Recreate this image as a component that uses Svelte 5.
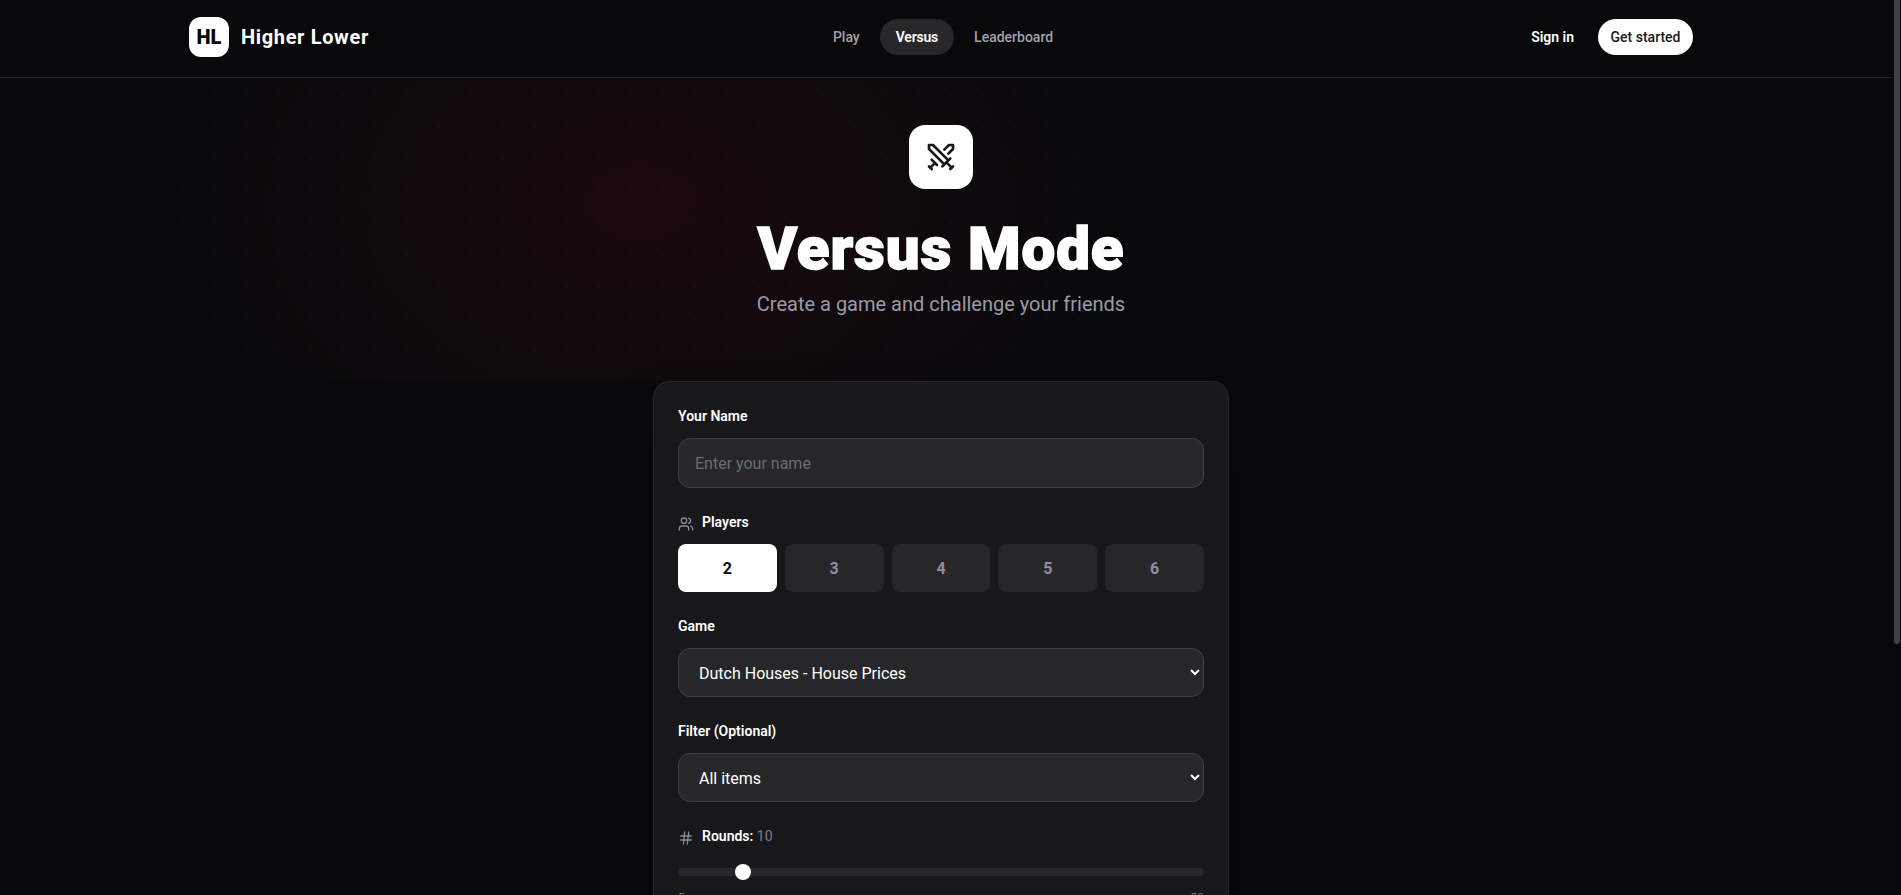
<script>
  let rounds = $state(10);
  let players = $state(2);
  const counts = [2, 3, 4, 5, 6];
</script>

<div class="window">
  <div class="scroll">
    <div class="page">
      <header class="header">
        <div class="bar">
          <a class="brand" href="#top">
            <span class="mark">HL</span>
            <span class="word">Higher Lower</span>
          </a>
          <nav class="nav">
            <a href="#play">Play</a>
            <a href="#versus" class="on">Versus</a>
            <a href="#board">Leaderboard</a>
          </nav>
          <div class="auth">
            <a class="signin" href="#in">Sign in</a>
            <a class="started" href="#start">Get started</a>
          </div>
        </div>
      </header>

      <section class="hero">
        <div class="badge">
          <svg width="32" height="32" viewBox="0 0 24 24" fill="none" stroke="#18181b" stroke-width="2" stroke-linecap="round" stroke-linejoin="round">
            <polyline points="14.5 17.5 3 6 3 3 6 3 17.5 14.5" />
            <line x1="13" y1="19" x2="19" y2="13" />
            <line x1="16" y1="16" x2="20" y2="20" />
            <line x1="19" y1="21" x2="21" y2="19" />
            <polyline points="14.5 6.5 18 3 21 3 21 6 17.5 9.5" />
            <line x1="5" y1="14" x2="9" y2="18" />
            <line x1="7" y1="17" x2="4" y2="20" />
            <line x1="3" y1="19" x2="5" y2="21" />
          </svg>
        </div>
        <h1>Versus Mode</h1>
        <p>Create a game and challenge your friends</p>
      </section>

      <main class="main">
        <form class="card">
          <div class="field">
            <label for="name">Your Name</label>
            <input id="name" type="text" placeholder="Enter your name" />
          </div>

          <div class="field">
            <div class="label-row">
              <svg width="16" height="16" viewBox="0 0 24 24" fill="none" stroke="#8a8a94" stroke-width="2" stroke-linecap="round" stroke-linejoin="round">
                <path d="M16 21v-2a4 4 0 0 0-4-4H6a4 4 0 0 0-4 4v2" />
                <circle cx="9" cy="7" r="4" />
                <path d="M22 21v-2a4 4 0 0 0-3-3.87" />
                <path d="M16 3.13a4 4 0 0 1 0 7.75" />
              </svg>
              <span>Players</span>
            </div>
            <div class="counts">
              {#each counts as n}
                <button type="button" class:sel={players === n} onclick={() => (players = n)}>{n}</button>
              {/each}
            </div>
          </div>

          <div class="field">
            <label for="game">Game</label>
            <select id="game">
              <option>Dutch Houses - House Prices</option>
            </select>
          </div>

          <div class="field">
            <label for="filter">Filter (Optional)</label>
            <select id="filter">
              <option>All items</option>
            </select>
          </div>

          <div class="field">
            <div class="label-row">
              <svg width="16" height="16" viewBox="0 0 24 24" fill="none" stroke="#8a8a94" stroke-width="2" stroke-linecap="round" stroke-linejoin="round">
                <line x1="4" y1="9" x2="20" y2="9" />
                <line x1="4" y1="15" x2="20" y2="15" />
                <line x1="10" y1="3" x2="8" y2="21" />
                <line x1="16" y1="3" x2="14" y2="21" />
              </svg>
              <span>Rounds: <em>{rounds}</em></span>
            </div>
            <input class="range" type="range" min="5" max="50" bind:value={rounds} />
            <div class="ends"><span>5</span><span>50</span></div>
          </div>

          <button class="create" type="button">Create Game</button>
        </form>
      </main>
    </div>
  </div>
  <div class="rail"><div class="thumb"></div></div>
</div>

<style>
  :global(body) {
    margin: 0;
    background: #09090b;
    overflow: hidden;
  }
  a { text-decoration: none; color: inherit; }
  .window {
    height: 100vh;
    display: flex;
    background: #09090b;
    color: #fff;
    font-family: Roboto, "Noto Sans", sans-serif;
  }
  .scroll {
    flex: 1;
    min-width: 0;
    overflow-y: auto;
    scrollbar-width: none;
  }
  .rail {
    width: 9px;
    flex: none;
    box-sizing: border-box;
    padding: 0 1px 0 2px;
  }
  .thumb {
    height: 644px;
    background: #3f3f46;
    border-radius: 0 0 3px 3px;
  }
  .page { min-height: 1244px; }

  .header {
    border-bottom: 1px solid #27272a;
    padding: 17px 10px 20px 0;
  }
  .bar {
    max-width: 1504px;
    margin: 0 auto;
    display: grid;
    grid-template-columns: 1fr auto 1fr;
    align-items: center;
    height: 40px;
  }
  .brand { display: flex; align-items: center; gap: 12px; }
  .mark {
    width: 40px;
    height: 40px;
    border-radius: 12px;
    background: #fff;
    color: #09090b;
    font-weight: 900;
    font-size: 20px;
    display: flex;
    align-items: center;
    justify-content: center;
  }
  .word { font-size: 20px; font-weight: 700; letter-spacing: 0.65px; }
  .nav {
    display: flex;
    gap: 4px;
    margin-left: 4px;
    font-size: 14px;
    font-weight: 500;
    color: #a1a1aa;
  }
  .nav a { padding: 8px 16px; line-height: 20px; border-radius: 18px; }
  .nav .on { background: #27272a; color: #fff; font-weight: 600; letter-spacing: -0.2px; }
  .auth {
    justify-self: end;
    display: flex;
    align-items: center;
    gap: 24px;
    font-size: 14px;
    font-weight: 500;
  }
  .signin { font-weight: 600; }
  .started {
    background: #fff;
    color: #18181b;
    padding: 8px 12.5px;
    line-height: 20px;
    border-radius: 18px;
  }

  .hero {
    height: 256px;
    padding: 47px 10px 0 0;
    display: flex;
    flex-direction: column;
    align-items: center;
    background-color: #09090b;
    background-image:
      radial-gradient(circle, rgba(255, 255, 255, 0.025) 1px, transparent 1px),
      radial-gradient(ellipse 470px 340px at 640px 125px, rgba(190, 18, 60, 0.09), transparent 100%);
    background-size: 32px 32px, 100% 100%;
    background-position: 7px 0, 0 0;
  }
  .badge {
    width: 64px;
    height: 64px;
    border-radius: 16px;
    background: #fff;
    display: flex;
    align-items: center;
    justify-content: center;
  }
  h1 {
    margin: 30px 0 0;
    font-size: 60px;
    line-height: 60px;
    font-weight: 900;
    letter-spacing: 0.9px;
    -webkit-text-stroke: 1.5px #fff;
  }
  p {
    margin: 11px 0 0;
    font-size: 20px;
    line-height: 28px;
    color: #9a9aa8;
  }

  .main { padding-right: 10px; }
  .card {
    width: 526px;
    margin: 0 auto;
    padding: 24px;
    border: 1px solid #27272a;
    border-radius: 16px;
    background: #18181b;
    box-shadow: 0 25px 50px -12px rgba(0, 0, 0, 0.5);
    display: flex;
    flex-direction: column;
    gap: 24px;
  }
  .field { display: flex; flex-direction: column; }
  label, .label-row {
    font-size: 14px;
    line-height: 20px;
    font-weight: 600;
    margin-bottom: 12px;
  }
  .label-row { display: flex; align-items: center; gap: 8px; }
  .label-row svg { margin-top: 3px; }
  em { font-style: normal; font-weight: 400; color: #7c7c88; }
  input[type="text"], select {
    box-sizing: border-box;
    width: 100%;
    background: #27272a;
    border: 1px solid #3f3f46;
    border-radius: 12px;
    color: #fff;
    font: inherit;
    font-size: 16px;
    outline: none;
  }
  input[type="text"] { height: 50px; padding: 0 16px; }
  input[type="text"]::placeholder { color: #6b6b75; }
  select { height: 49px; padding: 2px 16px 0; }
  .counts { display: grid; grid-template-columns: repeat(5, 1fr); gap: 8px; }
  .counts button {
    height: 48px;
    border: 0;
    border-radius: 8px;
    background: #27272a;
    color: #8f8f9c;
    font: inherit;
    font-size: 16px;
    font-weight: 700;
  }
  .counts .sel { background: #fff; color: #09090b; }
  .range {
    -webkit-appearance: none;
    appearance: none;
    display: block;
    width: 100%;
    height: 8px;
    margin: 10px 0 0;
    border-radius: 4px;
    background: #27272a;
    outline: none;
  }
  .range::-webkit-slider-thumb {
    -webkit-appearance: none;
    width: 16px;
    height: 16px;
    border-radius: 50%;
    background: #fff;
  }
  .ends {
    display: flex;
    justify-content: space-between;
    margin-top: 14px;
    font-size: 12px;
    line-height: 16px;
    color: #71717a;
  }
  .create {
    height: 56px;
    border: 0;
    border-radius: 12px;
    background: #fff;
    color: #09090b;
    font: inherit;
    font-size: 18px;
    font-weight: 700;
  }
</style>
